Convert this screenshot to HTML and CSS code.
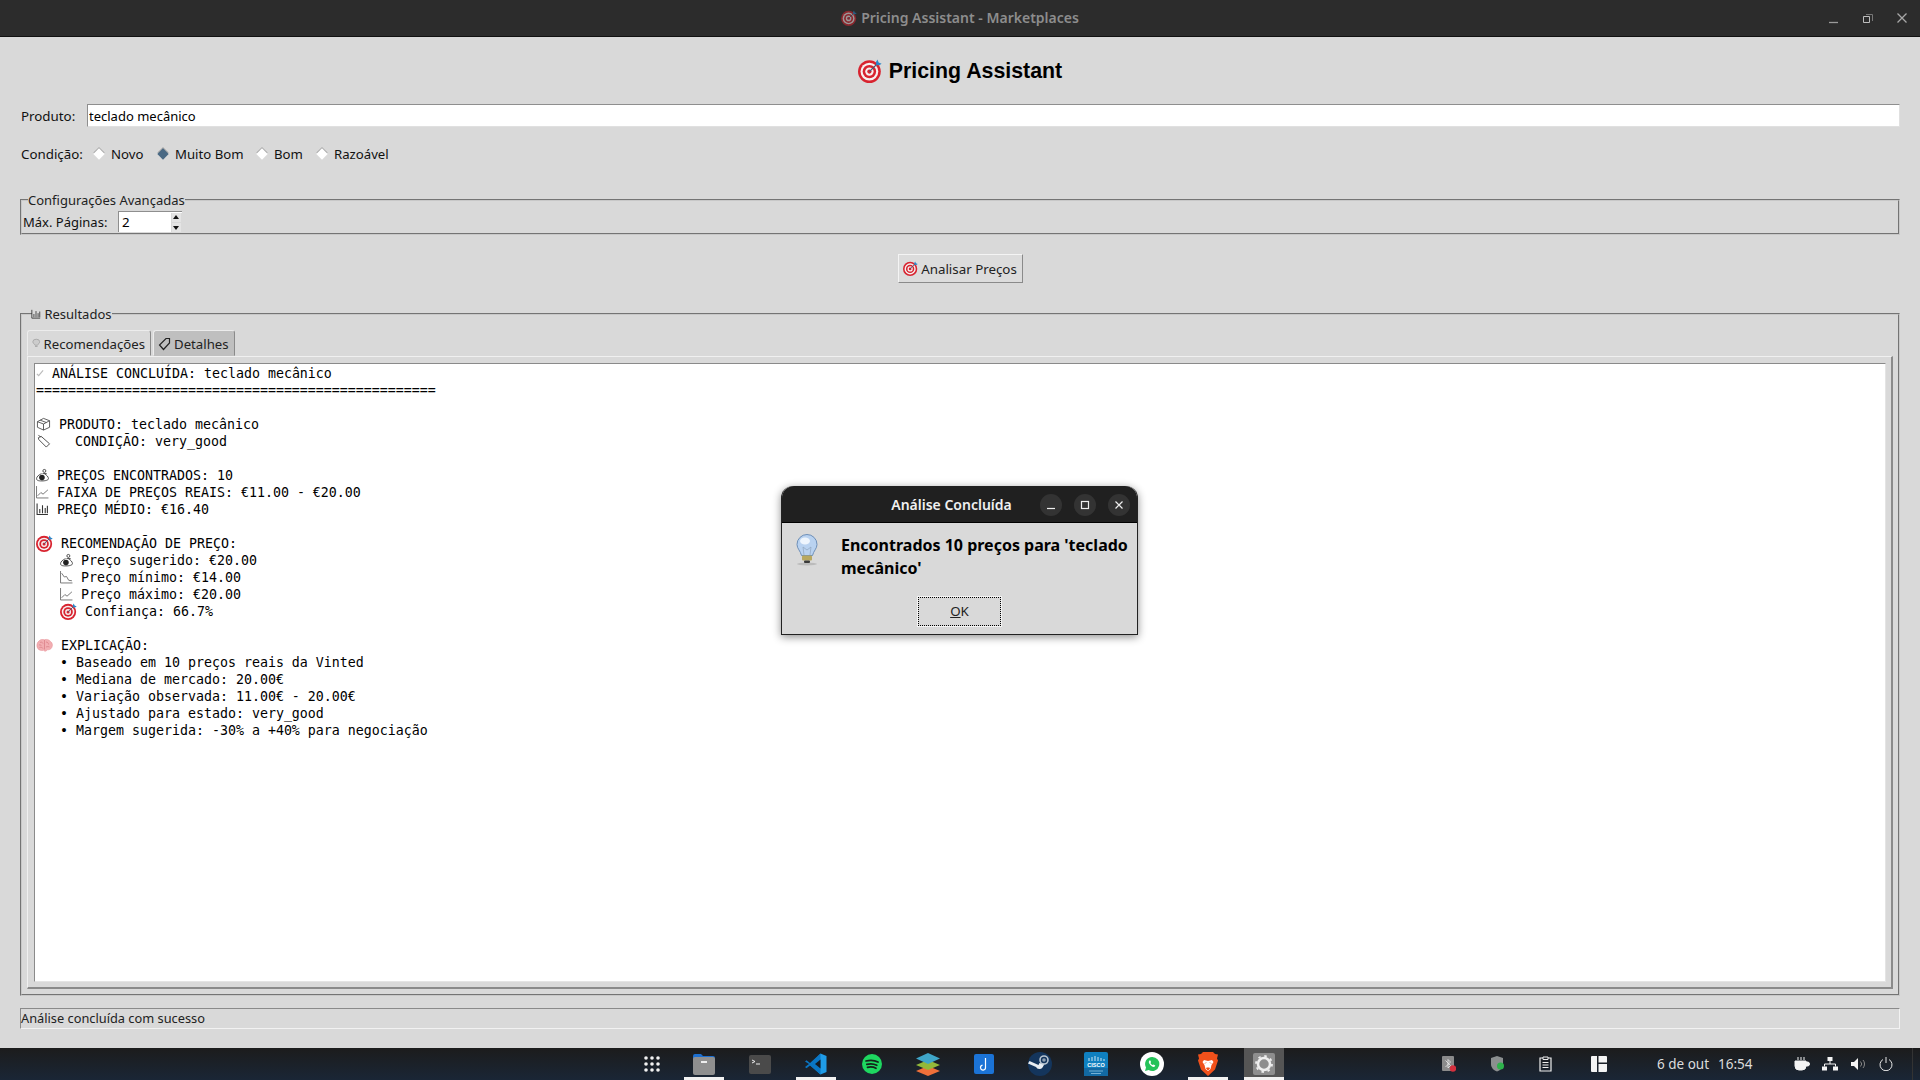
FILE: index.html
```html
<!DOCTYPE html>
<html lang="pt-BR">
<head>
    <meta charset="UTF-8">
    <meta name="viewport" content="width=device-width, initial-scale=1.0">
    <title>Pricing Assistant - Marketplaces</title>
    <link rel="stylesheet" href="styles.css">
</head>
<body>
    <svg class="defs" width="0" height="0">
        <symbol id="target" viewBox="0 0 20 20">
            <circle cx="9.5" cy="10.5" r="9.5" fill="#d8232f"/>
            <circle cx="9.5" cy="10.5" r="7.4" fill="#f6f0f0"/>
            <circle cx="9.5" cy="10.5" r="5.600" fill="#d8232f"/>
            <circle cx="9.5" cy="10.5" r="3.500" fill="#f6f0f0"/>
            <circle cx="9.5" cy="10.5" r="1.800" fill="#d8232f"/>
            <path d="M9.5 10.500L16 4" stroke="#3a5a78" stroke-width="1"/>
            <path d="M15 2.500l1.200-2 1 2.500 2.500 1-2 1.300-2.500-.3z" fill="#2a86c8"/>
        </symbol>
        <symbol id="bars" viewBox="0 0 12 12">
            <path d="M1 1v10h10M3.500 10V6M6 10V2.500M8.500 10V5M10.500 10V3" fill="none" stroke="#333" stroke-width="1"/>
        </symbol>
        <symbol id="bag" viewBox="0 0 14 14">
            <circle cx="9" cy="2.600" r="1.600" fill="none" stroke="#333" stroke-width=".9"/>
            <path d="M7 5.500h4.500M6 5.500C2.500 7 .6 9 .6 11c0 1.600 1.400 2.400 5.400 2.400s7.400-.8 7.400-2.400c0-2-1.800-4-4.400-5.500" fill="#fff" stroke="#333" stroke-width=".9"/>
            <circle cx="6.400" cy="9.800" r="3" fill="#222"/>
        </symbol>
        <symbol id="up" viewBox="0 0 12 12">
            <path d="M.5 .5v11h11M1.500 9.500l3-3 2 1.500 4.500-4" fill="none" stroke="#777" stroke-width=".9"/>
        </symbol>
        <symbol id="down" viewBox="0 0 12 12">
            <path d="M.5 .5v11h11M1.500 2.500l2.500 3.500 2-.5 2 3.500 3 .5" fill="none" stroke="#777" stroke-width=".9"/>
        </symbol>
        <symbol id="box" viewBox="0 0 15 15">
            <path d="M1 5l6.500-3.500L14 4v7l-6.500 3L1 11zM1 5l6.500 2.500L14 4M7.500 7.500V14M4 3.400l6.500 2.500" fill="none" stroke="#444" stroke-width=".9"/>
        </symbol>
        <symbol id="tag" viewBox="0 0 15 15">
            <path d="M2 4l3-1.500L14 10.500 10.500 14 2.500 6zM2 1l2.500 2.500" fill="none" stroke="#333" stroke-width=".9"/>
        </symbol>
        <symbol id="check" viewBox="0 0 9 9">
            <path d="M1 5.500l2 2L8 1.500" fill="none" stroke="#bbb" stroke-width="1.300"/>
        </symbol>
        <symbol id="brain" viewBox="0 0 17 14">
            <path d="M3 2.500C4.500 .5 7 1 8.500 1.200 10.500 .5 13.500 1 14.500 3c2 1 2.500 4 1.300 6-.8 2-3 2.500-4.800 2.300-.5 1.800-2.500 1.800-3.300 .5C5 12.300 2.500 11.800 1.500 9.500 .3 7.500 1 3.500 3 2.500z" fill="#f2aeb2" stroke="#e58c92" stroke-width=".5"/>
            <path d="M4 4c1.500-1 2.500 0 3 1M10 3.500c1.500 0 2.500 1 2.500 2.500M3 6.500c1-.3 2 0 2.500 .8M3.500 9c1.500-.5 3 0 3.500 1M10 8.500c1-.5 2.500-.5 3.500 0M8.500 1.500V11" fill="none" stroke="#d4727b" stroke-width=".6"/>
        </symbol>
    </svg>

    <header class="titlebar">
        <div class="titlebar-name">
            <svg class="title-icon"><use href="#target"/></svg>
            <span>Pricing Assistant - Marketplaces</span>
        </div>
        <div class="winctl">
            <svg width="12" height="12" viewBox="0 0 12 12"><path d="M1 10.500h9" stroke="#9a9a9a" stroke-width="1.300"/></svg>
            <svg width="12" height="12" viewBox="0 0 12 12"><path d="M1.500 4.500h6v6h-6z" fill="none" stroke="#bdbdbd"/><path d="M4 2.500h6.500V9" fill="none" stroke="#777"/></svg>
            <svg width="12" height="12" viewBox="0 0 12 12"><path d="M1.500 1.500l9 9M10.500 1.500l-9 9" stroke="#a8a8a8" stroke-width="1.300"/></svg>
        </div>
    </header>

    <main class="app">
        <h1 class="app-title">
            <svg class="h1-icon"><use href="#target"/></svg>
            <span>Pricing Assistant</span>
        </h1>

        <div class="row-product">
            <label class="lbl-product">Produto:</label>
            <input class="entry" type="text" value="teclado mecânico">
        </div>

        <div class="row-condition">
            <span class="lbl-condition">Condição:</span>
            <span class="radio rad-novo"><i class="dot"></i>Novo</span>
            <span class="radio rad-muito"><i class="dot on"></i>Muito Bom</span>
            <span class="radio rad-bom"><i class="dot"></i>Bom</span>
            <span class="radio"><i class="dot"></i>Razoável</span>
        </div>

        <fieldset class="group group-config">
            <legend>Configurações Avançadas</legend>
            <span class="lbl-pages">Máx. Páginas:</span>
            <div class="spin">
                <span class="spin-val">2</span>
                <div class="spin-btns"><b class="arr-up"></b><b class="arr-down"></b></div>
            </div>
        </fieldset>

        <div class="row-button">
            <button class="btn-analyze"><svg class="btn-icon"><use href="#target"/></svg>Analisar Preços</button>
        </div>

        <fieldset class="group group-results">
            <legend><svg class="leg-icon"><use href="#bars"/></svg> Resultados</legend>
            <div class="tabs">
                <div class="tab active">
                    <svg class="tab-bulb" viewBox="0 0 10 11"><path d="M1 3.500a4 3 0 0 1 8 0c0 2-2 2.500-2.500 4h-3C3 6 1 5.500 1 3.500zM3.500 9h3" fill="#ccc" stroke="#a5a5a5"/></svg>
                    Recomendações
                </div>
                <div class="tab">
                    <svg class="tab-tag" viewBox="0 0 13 14"><path d="M8 1.500h3.500V6L5.500 12.500 1.500 8z" fill="none" stroke="#222" stroke-width="1.200"/></svg>
                    Detalhes
                </div>
            </div>
            <div class="pane">
                <div class="text-box">
<div class="ln"><svg class="i8"><use href="#check"/></svg> ANÁLISE CONCLUÍDA: teclado mecânico</div>
<div class="ln">==================================================</div>
<div class="ln"> </div>
<div class="ln"><svg class="i15"><use href="#box"/></svg> PRODUTO: teclado mecânico</div>
<div class="ln"><svg class="i15"><use href="#tag"/></svg>   CONDIÇÃO: very_good</div>
<div class="ln"> </div>
<div class="ln"><svg class="i13"><use href="#bag"/></svg> PREÇOS ENCONTRADOS: 10</div>
<div class="ln"><svg class="i13"><use href="#up"/></svg> FAIXA DE PREÇOS REAIS: €11.00 - €20.00</div>
<div class="ln"><svg class="i13"><use href="#bars"/></svg> PREÇO MÉDIO: €16.40</div>
<div class="ln"> </div>
<div class="ln"><svg class="i17"><use href="#target"/></svg> RECOMENDAÇÃO DE PREÇO:</div>
<div class="ln">   <svg class="i13"><use href="#bag"/></svg> Preço sugerido: €20.00</div>
<div class="ln">   <svg class="i13"><use href="#down"/></svg> Preço mínimo: €14.00</div>
<div class="ln">   <svg class="i13"><use href="#up"/></svg> Preço máximo: €20.00</div>
<div class="ln">   <svg class="i17"><use href="#target"/></svg> Confiança: 66.7%</div>
<div class="ln"> </div>
<div class="ln"><svg class="i17"><use href="#brain"/></svg> EXPLICAÇÃO:</div>
<div class="ln">   • Baseado em 10 preços reais da Vinted</div>
<div class="ln">   • Mediana de mercado: 20.00€</div>
<div class="ln">   • Variação observada: 11.00€ - 20.00€</div>
<div class="ln">   • Ajustado para estado: very_good</div>
<div class="ln">   • Margem sugerida: -30% a +40% para negociação</div>
                </div>
            </div>
        </fieldset>

        <div class="status">Análise concluída com sucesso</div>
    </main>

    <footer class="taskbar">
        <div class="dock">
            <div class="dock-item apps">
                <svg width="18" height="18" viewBox="0 0 18 18" fill="#f2f2f2"><circle cx="3" cy="3" r="1.800"/><circle cx="9" cy="3" r="1.800"/><circle cx="15" cy="3" r="1.800"/><circle cx="3" cy="9" r="1.800"/><circle cx="9" cy="9" r="1.800"/><circle cx="15" cy="9" r="1.800"/><circle cx="3" cy="15" r="1.800"/><circle cx="9" cy="15" r="1.800"/><circle cx="15" cy="15" r="1.800"/></svg>
            </div>
            <div class="dock-item running">
                <svg width="24" height="22" viewBox="0 0 24 22"><path d="M1 3a2 2 0 0 1 2-2h6l2 2h10a2 2 0 0 1 2 2v4H1z" fill="#1c6fd0"/><rect x="1" y="4" width="22" height="18" rx="2" fill="#8f8f8f"/><rect x="9" y="8" width="6" height="2" fill="#eee"/></svg>
            </div>
            <div class="dock-item">
                <svg width="22" height="19" viewBox="0 0 22 19"><rect width="22" height="19" rx="2" fill="#4a4a4a"/><path d="M3 5l3 1.500L3 8" fill="none" stroke="#eee"/><path d="M7 9h4" stroke="#eee"/></svg>
            </div>
            <div class="dock-item running">
                <svg width="22" height="22" viewBox="0 0 22 22"><path d="M15.500 .5L21.500 3v16l-6 2.500L5 12z" fill="#1f9ce8"/><path d="M15.500 .5L5 10 1.500 7.300 0 8.500 4 11 0 14l1.500 1.200L5 12.500 15.500 21.500z" fill="#0a76c4"/><path d="M15.500 6.500L10 11l5.500 4.500z" fill="#141a22"/></svg>
            </div>
            <div class="dock-item">
                <svg width="20" height="20" viewBox="0 0 20 20"><circle cx="10" cy="10" r="10" fill="#1ed760"/><path d="M4 7c4-1 8.500-.8 12 1M4.800 10.300c3.500-.8 7-.6 10 1M5.500 13.300c3-.6 6-.4 8.500 1" fill="none" stroke="#14211a" stroke-width="1.700" stroke-linecap="round"/></svg>
            </div>
            <div class="dock-item">
                <svg width="24" height="23" viewBox="0 0 24 23"><path d="M12 13l12 5-12 5-12-5z" fill="#f0703a"/><path d="M12 7l12 5-12 5-12-5z" fill="#93b93a"/><path d="M12 0l12 5.500-12 5.500L0 5.500z" fill="#3fa6c9"/></svg>
            </div>
            <div class="dock-item">
                <svg width="20" height="20" viewBox="0 0 20 20"><rect width="20" height="20" rx="2" fill="#1b73d6"/><path d="M11.500 4v9.500a2.500 2.500 0 1 1-3-2.400" fill="none" stroke="#fff" stroke-width="1.200"/></svg>
            </div>
            <div class="dock-item">
                <svg width="24" height="24" viewBox="0 0 24 24"><circle cx="12" cy="12" r="12" fill="#14355c"/><path d="M0 11.500l8 3.500a3.800 3.800 0 0 0 6.500 .5l2-3.500-5-1-1 2-9-4z" fill="#e8edf2"/><circle cx="16" cy="8" r="4" fill="none" stroke="#b8c4d0" stroke-width="1.600"/><circle cx="16" cy="8" r="1.800" fill="#8fa0b2"/></svg>
            </div>
            <div class="dock-item">
                <svg width="24" height="24" viewBox="0 0 24 24"><rect width="24" height="24" rx="2" fill="#0f80c0"/><rect y="16" width="24" height="8" fill="#1269a3"/><path d="M5 6v3M8 5v4M11 4v5M14 5v4M17 6v3M20 7v2" stroke="#fff" stroke-width=".8"/><text x="12" y="14.500" class="cisco">CISCO</text><path d="M5 19h14M7 21.500h10" stroke="#9fd0ea" stroke-width=".7"/></svg>
            </div>
            <div class="dock-item">
                <svg width="24" height="24" viewBox="0 0 24 24"><circle cx="12" cy="12" r="12" fill="#fff"/><path d="M12 5a7 7 0 0 0-6 10.500L5 19l3.700-1A7 7 0 1 0 12 5z" fill="#25c35a"/><path d="M9.500 8.500c-1 1-1 2.500 .8 4.500s3.500 2.500 4.500 1.500l.5-1-1.800-1-.8 .6c-1-.4-1.800-1.300-2.200-2.200l.6-.8-1-1.800z" fill="#fff"/></svg>
            </div>
            <div class="dock-item running">
                <svg width="20" height="24" viewBox="0 0 20 24"><path d="M5 0h10l2 2 3 .5-1 4 1 2-3 9-7 6.500-7-6.500-3-9 1-2-1-4L3 2z" fill="#f1511b"/><path d="M6 8l4 1 4-1 1.500 2-2 3-1 4-2.500 2-2.500-2-1-4-2-3z" fill="#fff"/><path d="M8 10.500l-1 1M12 10.500l1 1M8.500 16h3L10 18z" stroke="#f1511b" fill="#f1511b"/></svg>
            </div>
            <div class="dock-item current running">
                <svg width="22" height="22" viewBox="0 0 22 22"><rect width="22" height="22" rx="2" fill="#8e8e8e"/><circle cx="11" cy="11" r="6" fill="none" stroke="#eee" stroke-width="2.500"/><circle cx="11" cy="11" r="8" fill="none" stroke="#eee" stroke-width="1.800" stroke-dasharray="2.500 3.800"/></svg>
            </div>
        </div>

        <div class="tray">
            <svg class="tray-bt" width="14" height="16" viewBox="0 0 14 16"><rect width="12" height="15" rx="1" fill="#8b8b8b"/><path d="M3.500 4.500l5 5-2.500 2.500V3.500l2.500 2.500-5 5" fill="none" stroke="#eee" stroke-width=".8"/><circle cx="11" cy="12.500" r="3.200" fill="#d5303e"/></svg>
            <svg class="tray-shield" width="14" height="16" viewBox="0 0 14 16"><path d="M6 0l6 2v6c0 4-3 6.500-6 7.500C3 14.500 0 12 0 8V2z" fill="#8b8f8f"/><circle cx="9.500" cy="10" r="3.500" fill="#2fb24c"/></svg>
            <svg class="tray-clip" width="14" height="16" viewBox="0 0 14 16"><path d="M4 2H1v13h11V2H9" fill="none" stroke="#eee" stroke-width="1.200"/><path d="M4 1h5v2.500H4zM3.500 6.500h6M3.500 9h6M3.500 11.500h6" fill="none" stroke="#eee"/></svg>
            <svg class="tray-layout" width="16" height="16" viewBox="0 0 16 16"><path d="M1 0h5v16H1a1 1 0 0 1-1-1V1a1 1 0 0 1 1-1zM7.500 0H15a1 1 0 0 1 1 1v5.500H7.500zM7.500 8H16v7a1 1 0 0 1-1 1H7.500z" fill="#f4f4f4"/></svg>
            <span class="clock"><span>6 de out</span><span>16:54</span></span>
            <svg class="tray-cup" width="16" height="14" viewBox="0 0 16 14"><path d="M1 4h11v5a4 4 0 0 1-4 4H5a4 4 0 0 1-4-4zM12 5h1.500a1.500 1.500 0 0 1 0 4H12" fill="#f4f4f4" stroke="#f4f4f4"/><path d="M4 0v3M7 0v3M10 0v3" stroke="#f4f4f4"/></svg>
            <svg class="tray-net" width="16" height="14" viewBox="0 0 16 14" fill="#f4f4f4"><rect x="5.500" y="0" width="5" height="4"/><rect x="0" y="9.500" width="5" height="4"/><rect x="11" y="9.500" width="5" height="4"/><path d="M8 4v3M2.500 9.500V7h11v2.500" fill="none" stroke="#f4f4f4"/></svg>
            <svg class="tray-vol" width="15" height="12" viewBox="0 0 15 12"><path d="M0 4h3l4-4v12L3 8H0z" fill="#f4f4f4"/><path d="M9.500 3.500a3.500 3.500 0 0 1 0 5M12 2a6 6 0 0 1 0 8" fill="none" stroke="#888"/></svg>
            <svg class="tray-power" width="14" height="14" viewBox="0 0 14 14"><path d="M4 2.500a6 6 0 1 0 6 0M7 0v6" fill="none" stroke="#e8e8e8"/></svg>
        </div>
    </footer>

    <div class="dialog">
        <div class="dialog-head">
            <span class="dialog-title">Análise Concluída</span>
            <div class="dialog-ctl">
                <span class="circle"><svg width="10" height="10" viewBox="0 0 10 10"><path d="M1 8.500h8" stroke="#eee" stroke-width="1.200"/></svg></span>
                <span class="circle"><svg width="10" height="10" viewBox="0 0 10 10"><rect x="1.500" y="1.500" width="7" height="7" fill="none" stroke="#eee" stroke-width="1.200"/></svg></span>
                <span class="circle"><svg width="10" height="10" viewBox="0 0 10 10"><path d="M1.500 1.500l7 7M8.500 1.500l-7 7" stroke="#eee" stroke-width="1.200"/></svg></span>
            </div>
        </div>
        <div class="dialog-body">
            <svg class="bulb" viewBox="0 0 22 32">
                <ellipse cx="11" cy="30" rx="10" ry="1.500" fill="#bbb"/>
                <path d="M1 10.500a10 10 0 0 1 20 0c0 4-3.500 6.500-4.500 11h-11C4.500 17 1 14.500 1 10.500z" fill="#b9d2f0" stroke="#6d8fb8"/>
                <ellipse cx="9" cy="7" rx="5" ry="3.500" fill="#eef5fd"/>
                <path d="M8 21l-1-8 4 3 4-3-1 8" fill="none" stroke="#8fa5bd" stroke-width=".7"/>
                <rect x="6" y="21.500" width="10" height="5" rx="1" fill="#b8a860"/>
                <rect x="8" y="26.500" width="6" height="2.500" rx="1" fill="#3a3a3a"/>
            </svg>
            <p class="dialog-msg">Encontrados 10 preços para 'teclado mecânico'</p>
        </div>
        <div class="dialog-foot">
            <button class="btn-ok"><u>O</u>K</button>
        </div>
    </div>
</body>
</html>
```

FILE: styles.css
```css
* {
    box-sizing: border-box;
}
html, body {
    margin: 0;
    height: 1080px;
    overflow: hidden;
}
body {
    display: flex;
    flex-direction: column;
    font-family: "Noto Sans", sans-serif;
    font-size: 13.33px;
    color: #111;
    background-color: #d9d9d9;
}
.defs {
    position: absolute;
}

/* window title */
.titlebar {
    height: 37px;
    flex: none;
    display: flex;
    align-items: center;
    justify-content: center;
    padding-bottom: 1px;
    background-color: #2c2c2c;
    border-bottom: 1px solid #111;
}
.titlebar-name {
    display: flex;
    align-items: center;
    gap: 4px;
    color: #8d8d8d;
    font-size: 14px;
    font-weight: 600;
}
.title-icon {
    width: 16px;
    height: 16px;
    opacity: 0.55;
}
.winctl {
    position: absolute;
    top: 12px;
    right: 12px;
    display: flex;
    gap: 22px;
}

/* main form */
.app {
    flex: 1;
    display: flex;
    flex-direction: column;
    padding: 0 20px;
}
.app-title {
    height: 67px;
    margin: 0;
    padding-top: 1px;
    display: flex;
    align-items: center;
    justify-content: center;
    gap: 7px;
    font-family: "Liberation Sans", Arial, sans-serif;
    font-size: 21.33px;
    font-weight: bold;
    color: #000;
}
.h1-icon {
    width: 24px;
    height: 24px;
}
.row-product {
    display: flex;
    align-items: center;
    height: 23px;
}
.lbl-product {
    width: 67px;
    padding-left: 1px;
}
.entry {
    flex: 1;
    height: 23px;
    padding: 0 1px;
    font: inherit;
    font-size: 13px;
    color: #000;
    background-color: #fff;
    border: 1px solid #e0e0e0;
    border-top-color: #8e8e8e;
    border-left-color: #8e8e8e;
    outline: none;
}
.row-condition {
    display: flex;
    align-items: center;
    height: 18px;
    margin-top: 18px;
    padding-left: 1px;
}
.lbl-condition {
    width: 73px;
}
.radio {
    display: flex;
    align-items: center;
    gap: 8px;
    font-size: 13.2px;
}
.rad-novo { width: 64px; }
.rad-muito { width: 99px; }
.rad-bom { width: 60px; }
.dot {
    width: 8px;
    height: 8px;
    margin-left: 1px;
    background-color: #fff;
    box-shadow: -1px -1px 0 #aaa;
    transform: rotate(45deg);
}
.dot.on {
    background-color: #4a6984;
}

/* group boxes */
.group {
    margin: 0;
    min-width: 0;
    padding: 0 1px;
    border: 2px groove #c8c8c8;
}
.group legend {
    padding: 0;
    margin-left: 5px;
    line-height: 16px;
    font-size: 13px;
    color: #222;
}
.group-config {
    height: 43px;
    margin-top: 29px;
    padding-top: 3px;
    display: flex;
    align-items: center;
}
.lbl-pages {
    display: inline-block;
    width: 95px;
    font-size: 13px;
    vertical-align: middle;
}
.spin {
    display: inline-flex;
    vertical-align: middle;
    width: 64px;
    height: 21px;
    padding-left: 3px;
    align-items: center;
    justify-content: space-between;
    background-color: #fff;
    border-left: 1px solid #8e8e8e;
    border-top: 1px solid #8e8e8e;
    color: #000;
}
.spin-btns {
    display: flex;
    flex-direction: column;
    gap: 1px;
    background-color: #d9d9d9;
    padding: 0 1px;
}
.spin-btns b {
    width: 9px;
    height: 9px;
    display: block;
    background-color: #e4e4e4;
    position: relative;
}
.arr-up::after,
.arr-down::after {
    content: "";
    position: absolute;
    left: 1px;
    border-left: 3.5px solid transparent;
    border-right: 3.5px solid transparent;
}
.arr-up::after {
    top: 2px;
    border-bottom: 4px solid #111;
}
.arr-down::after {
    top: 3px;
    border-top: 4px solid #111;
}
.row-button {
    display: flex;
    justify-content: center;
    margin-top: 19px;
}
.btn-analyze {
    width: 125px;
    height: 29px;
    padding: 0;
    display: flex;
    align-items: center;
    justify-content: center;
    gap: 3px;
    font: inherit;
    color: #222;
    background-color: #dcdcdc;
    border: 1px solid;
    border-color: #f4f4f4 #8a8a8a #8a8a8a #f4f4f4;
}
.btn-icon {
    width: 15px;
    height: 15px;
}
.group-results {
    height: 690px;
    margin-top: 23px;
    padding: 0 5px 4px 5px;
}
.leg-icon {
    width: 10px;
    height: 10px;
    margin-left: -1px;
    margin-right: 0;
}
.tabs {
    display: flex;
    gap: 2px;
    height: 26px;
    margin-top: 8px;
}
.tab {
    display: flex;
    align-items: center;
    gap: 3px;
    padding: 1px 5px 0 4px;
    font-size: 13.2px;
    color: #222;
    background-color: #bfbfbf;
    border: 1px solid;
    border-color: #ececec #8a8a8a #bfbfbf #ececec;
    border-radius: 3px 3px 0 0;
}
.tab.active {
    width: 124px;
    background-color: #d9d9d9;
    border-bottom-color: #d9d9d9;
}
.tab-bulb {
    width: 10px;
    height: 11px;
}
.tab-tag {
    width: 13px;
    height: 14px;
}
.pane {
    height: 633px;
    padding: 6px 5px 5px 6px;
    border-top: 1px solid #f0f0f0;
    border-left: 1px solid #f0f0f0;
    border-right: 2px solid #8a8a8a;
    border-bottom: 2px solid #8a8a8a;
}
.text-box {
    height: 100%;
    padding: 1px 0 0 1px;
    background-color: #fff;
    border: 1px solid;
    border-color: #8a8a8a #e4e4e4 #e4e4e4 #8a8a8a;
    font-family: "DejaVu Sans Mono", "Liberation Mono", monospace;
    font-size: 13.29px;
    color: #000;
}
.ln {
    height: 17px;
    line-height: 17px;
    white-space: pre;
}
.ln svg {
    display: inline-block;
    vertical-align: -2px;
    height: 14px;
}
.ln svg.i17 {
    height: 17px;
    vertical-align: -4px;
}
.i8 { width: 8px; }
.i13 { width: 13px; }
.i15 { width: 15px; }
.i17 { width: 17px; }
.status {
    height: 21px;
    margin-top: 12px;
    line-height: 19px;
    font-size: 12.8px;
    white-space: nowrap;
    border: 1px solid;
    border-color: #8a8a8a #f2f2f2 #f2f2f2 #8a8a8a;
    color: #222;
}

/* desktop dock */
.taskbar {
    height: 32px;
    flex: none;
    display: flex;
    background: linear-gradient(#1c1c1c, #1a2636);
    color: #e8e8e8;
}
.dock {
    width: 680px;
    margin-left: 624px;
    display: flex;
}
.dock-item {
    position: relative;
    width: 56px;
    display: flex;
    align-items: center;
    justify-content: center;
}
.dock-item.apps {
    width: 52px;
    justify-content: flex-start;
    padding-left: 19px;
}
.dock-item.current::before {
    content: "";
    position: absolute;
    top: 0;
    bottom: 0;
    left: 8px;
    right: 8px;
    background-color: #555;
}
.dock-item svg {
    position: relative;
}
.dock-item.running::after {
    content: "";
    position: absolute;
    left: 8px;
    right: 8px;
    bottom: 0;
    height: 3px;
    background-color: #f2f2f2;
}
.cisco {
    font-family: "Liberation Sans", sans-serif;
    font-size: 5.5px;
    font-weight: bold;
    fill: #fff;
    text-anchor: middle;
}
.tray {
    flex: 1;
    display: flex;
    align-items: center;
    border-right: 1px solid #333;
    margin-right: 7px;
}
.tray svg {
    flex: none;
}
.tray-bt { margin-left: 138px; }
.tray-shield { margin-left: 35px; }
.tray-clip { margin-left: 34px; }
.tray-layout { margin-left: 38px; }
.clock {
    margin-left: 50px;
    display: flex;
    gap: 9px;
    font-size: 13.5px;
    color: #dcdcdc;
}
.tray-cup { margin-left: 41px; }
.tray-net { margin-left: 12px; }
.tray-vol { margin-left: 13px; }
.tray-power { margin-left: 13px; }

/* message box on top of the window */
.dialog {
    position: absolute;
    left: 781px;
    top: 486px;
    width: 357px;
    height: 149px;
    display: flex;
    flex-direction: column;
    background-color: #d9d9d9;
    border-radius: 12px 12px 0 0;
    border: 1px solid #222;
    border-top: none;
    box-shadow: 0 2px 8px rgba(0, 0, 0, 0.45);
}
.dialog-head {
    height: 37px;
    flex: none;
    position: relative;
    display: flex;
    align-items: center;
    justify-content: center;
    padding-right: 16px;
    background-color: #202020;
    border-bottom: 1px solid #000;
    border-radius: 12px 12px 0 0;
}
.dialog-title {
    color: #f0f0f0;
    font-size: 14px;
    font-weight: 600;
}
.dialog-ctl {
    position: absolute;
    right: 7px;
    top: 8px;
    display: flex;
    gap: 12px;
}
.circle {
    width: 22px;
    height: 22px;
    display: flex;
    align-items: center;
    justify-content: center;
    border-radius: 50%;
    background-color: #333;
}
.dialog-body {
    flex: 1;
    display: flex;
    padding: 11px 8px 0 14px;
}
.bulb {
    width: 22px;
    height: 32px;
    flex: none;
}
.dialog-msg {
    margin: 0 0 0 23px;
    font-size: 16px;
    font-weight: bold;
    line-height: 23px;
    color: #000;
}
.dialog-foot {
    height: 37px;
    flex: none;
    display: flex;
    justify-content: center;
}
.btn-ok {
    width: 83px;
    height: 29px;
    padding: 0 0 2px;
    font: inherit;
    color: #222;
    background-color: #d9d9d9;
    border: 1px dotted #000;
    box-shadow: 0 0 0 1px #f4f4f4;
}
```
